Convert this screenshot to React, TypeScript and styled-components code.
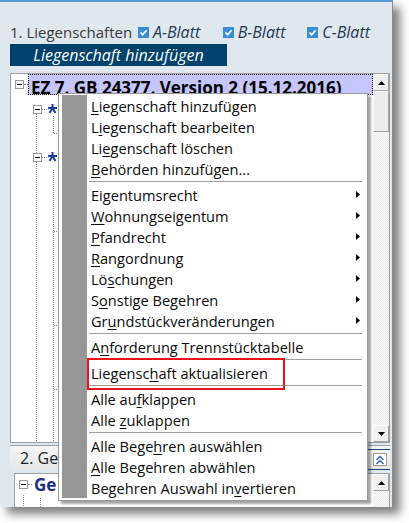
import React from "react";
import styled, { createGlobalStyle } from "styled-components";

const GlobalStyle = createGlobalStyle`
  html, body { margin: 0; padding: 0; background: #ffffff; }
  body { font-family: "Open Sans", "Noto Sans", "DejaVu Sans", sans-serif; }
  * { box-sizing: border-box; }
`;

const Stage = styled.div`
  width: 409px;
  height: 523px;
  position: relative;
  overflow: hidden;
  background: #ffffff;
`;

const Window = styled.div`
  width: 393px;
  height: 507px;
  background: #dfe7ef;
  border-top: 2px solid #5b9bd5;
  border-right: 1px solid #8a8a8a;
  box-shadow: 7px 7px 9px rgba(0, 0, 0, 0.5);
  padding-left: 10px;
  display: flex;
  flex-direction: column;
  overflow: hidden;
`;

const HeaderRow = styled.div`
  margin-top: 20px;
  height: 20px;
  display: flex;
  align-items: center;
  font-size: 15px;
  color: #3a3a3a;
`;

const HeaderLabel = styled.span`
  width: 133px;
  white-space: nowrap;
`;

const CheckGroup = styled.label`
  width: 88px;
  display: flex;
  align-items: center;
  gap: 4px;
`;

const CheckBox = styled.span`
  width: 11px;
  height: 11px;
  background: #3a8dd4;
  display: inline-flex;
  align-items: center;
  justify-content: center;
  flex: none;
`;

const CheckLabel = styled.span`
  font-style: italic;
  color: #26374f;
  font-size: 16px;
  white-space: nowrap;
`;

const AddButton = styled.div`
  margin-top: 2px;
  width: 217px;
  height: 25px;
  background: #00426b;
  color: #ffffff;
  font-style: italic;
  font-size: 16px;
  display: flex;
  align-items: center;
  justify-content: center;
`;

const TreePanel = styled.div`
  margin-top: 7px;
  width: 380px;
  height: 370px;
  border: 1px solid #a0a0a0;
  background: #ffffff;
  display: flex;
  flex: none;
`;

const TreeArea = styled.div`
  flex: 1;
  display: flex;
  flex-direction: column;
  overflow: hidden;
`;

const TreeRow = styled.div`
  height: 21px;
  display: flex;
  align-items: center;
  flex: none;
`;

const ToggleBox = styled.span<{ $ml: number }>`
  margin-left: ${(p) => p.$ml}px;
  width: 9px;
  height: 9px;
  border: 1px solid #9a9a9a;
  background: #ffffff;
  display: inline-flex;
  align-items: center;
  justify-content: center;
  flex: none;
  &::before {
    content: "";
    width: 5px;
    height: 1px;
    background: #000000;
  }
`;

const Stub = styled.span`
  width: 4px;
  height: 0;
  border-top: 1px dotted #8a8a8a;
  flex: none;
`;

const SelectedLabel = styled.div`
  flex: 1;
  height: 21px;
  background: #c6c6fe;
  border: 1px dotted #000000;
  padding-left: 2px;
  font-weight: 700;
  font-size: 17px;
  line-height: 25px;
  color: #000000;
  white-space: nowrap;
  overflow: hidden;
`;

const NodeLabel = styled.span`
  margin-left: 2px;
  font-weight: 700;
  font-size: 17px;
  color: #1b2f86;
  white-space: nowrap;
`;

const ScrollBar = styled.div`
  width: 16px;
  display: flex;
  flex-direction: column;
  background-color: #f4f4f4;
  background-image: repeating-conic-gradient(#e9e9e9 0 25%, #fbfbfb 0 50%);
  background-size: 2px 2px;
  flex: none;
`;

const ScrollButton = styled.div<{ $h: number }>`
  height: ${(p) => p.$h}px;
  background: #f0f0f0;
  border: 1px solid;
  border-color: #ffffff #a0a0a0 #a0a0a0 #f8f8f8;
  display: flex;
  align-items: center;
  justify-content: center;
  flex: none;
`;

const Thumb = styled.div`
  height: 41px;
  background: #ececec;
  border: 1px solid;
  border-color: #ffffff #a0a0a0 #a0a0a0 #f8f8f8;
  flex: none;
`;

const Track = styled.div`
  flex: 1;
`;

const SectionHeader = styled.div`
  margin-top: 2px;
  width: 380px;
  height: 25px;
  border-top: 1px solid #a0a0a0;
  background: linear-gradient(#f6f6f6, #e6e6e6);
  display: flex;
  align-items: center;
  padding-left: 10px;
  font-size: 16px;
  color: #1e1e1e;
  flex: none;
`;

const HeaderText = styled.span`
  flex: 1;
  white-space: nowrap;
  overflow: hidden;
`;

const CollapseCell = styled.div`
  align-self: flex-end;
  width: 22px;
  height: 21px;
  border-top: 1px solid #23407a;
  border-bottom: 1px solid #23407a;
  display: flex;
  align-items: center;
  justify-content: center;
  padding-left: 1px;
  flex: none;
`;

const CollapseBox = styled.span`
  width: 14px;
  height: 13px;
  border: 1px solid #9a9a9a;
  background: #ffffff;
  display: inline-flex;
  align-items: center;
  justify-content: center;
`;

const SecondPanel = styled.div`
  margin-top: 3px;
  margin-left: 4px;
  width: 376px;
  flex: 1;
  border: 1px solid #a0a0a0;
  border-bottom: none;
  background: #ffffff;
  display: flex;
`;

const Menu = styled.div`
  position: absolute;
  left: 58px;
  top: 93px;
  width: 310px;
  border: 1px solid #999999;
  background: #ffffff;
  padding: 1px 2px 2px 3px;
  box-shadow: 3px 3px 2px rgba(0, 0, 0, 0.35);
  display: flex;
`;

const Gutter = styled.div`
  width: 25px;
  background: #969696;
  flex: none;
`;

const MenuList = styled.div`
  flex: 1;
  display: flex;
  flex-direction: column;
`;

const MenuItem = styled.div<{ $framed?: boolean }>`
  position: relative;
  height: 21px;
  display: flex;
  align-items: center;
  justify-content: space-between;
  padding: 0 5px 0 4px;
  font-size: 14.6px;
  color: #0b0b0b;
  white-space: nowrap;
  u {
    text-decoration: underline;
    text-underline-offset: 2px;
  }
  ${(p) =>
    p.$framed &&
    `
    &::after {
      content: "";
      position: absolute;
      left: 0;
      top: -4px;
      width: 194px;
      height: 28px;
      border: 2px solid #e8141b;
    }
  `}
`;

const Separator = styled.div`
  height: 1px;
  margin: 2px 3px 2px 2px;
  background: #a0a0a0;
`;

type Entry =
  | { kind: "item"; label: string; u: number; sub?: boolean; framed?: boolean }
  | { kind: "sep" };

const entries: Entry[] = [
  { kind: "item", label: "Liegenschaft hinzufügen", u: 0 },
  { kind: "item", label: "Liegenschaft bearbeiten", u: 1 },
  { kind: "item", label: "Liegenschaft löschen", u: 2 },
  { kind: "item", label: "Behörden hinzufügen...", u: 0 },
  { kind: "sep" },
  { kind: "item", label: "Eigentumsrecht", u: -1, sub: true },
  { kind: "item", label: "Wohnungseigentum", u: 0, sub: true },
  { kind: "item", label: "Pfandrecht", u: 0, sub: true },
  { kind: "item", label: "Rangordnung", u: 0, sub: true },
  { kind: "item", label: "Löschungen", u: 2, sub: true },
  { kind: "item", label: "Sonstige Begehren", u: 1, sub: true },
  { kind: "item", label: "Grundstückveränderungen", u: 2, sub: true },
  { kind: "sep" },
  { kind: "item", label: "Anforderung Trennstücktabelle", u: 1 },
  { kind: "sep" },
  { kind: "item", label: "Liegenschaft aktualisieren", u: 8, framed: true },
  { kind: "sep" },
  { kind: "item", label: "Alle aufklappen", u: 7 },
  { kind: "item", label: "Alle zuklappen", u: 5 },
  { kind: "sep" },
  { kind: "item", label: "Alle Begehren auswählen", u: 9 },
  { kind: "item", label: "Alle Begehren abwählen", u: 0 },
  { kind: "item", label: "Begehren Auswahl invertieren", u: 19 },
];

function Mnemonic({ label, u }: { label: string; u: number }) {
  if (u < 0) return <span>{label}</span>;
  return (
    <span>
      {label.slice(0, u)}
      <u>{label[u]}</u>
      {label.slice(u + 1)}
    </span>
  );
}

const SubArrow = () => (
  <svg width="4" height="7" viewBox="0 0 4 7">
    <polygon points="0,0 4,3.5 0,7" fill="#000" />
  </svg>
);

const Tri = ({ up }: { up: boolean }) => (
  <svg width="7" height="4" viewBox="0 0 7 4">
    <polygon points={up ? "0,4 3.5,0 7,4" : "0,0 7,0 3.5,4"} fill="#000" />
  </svg>
);

const Check = () => (
  <svg width="9" height="9" viewBox="0 0 9 9">
    <polyline points="1.5,4.5 3.7,6.8 7.6,2.2" fill="none" stroke="#fff" strokeWidth="1.7" />
  </svg>
);

const Person = ({ y }: { y: number }) => (
  <g stroke="#1b3a9c" strokeWidth="2" fill="none">
    <line x1="37" y1={y + 3} x2="46" y2={y + 3} />
    <line x1="41.5" y1={y - 1} x2="41.5" y2={y + 4} />
    <polyline points={`38.5,${y + 8} 41.5,${y + 3} 44.5,${y + 8}`} />
  </g>
);

const dot = { stroke: "#8a8a8a", strokeWidth: 1, strokeDasharray: "1 1" };

const TreeGuides = () => (
  <svg width="60" height="347" viewBox="0 0 60 347">
    <line x1="25.5" y1="19" x2="25.5" y2="58" {...dot} />
    <line x1="25.5" y1="67" x2="25.5" y2="347" {...dot} />
    <rect x="22.5" y="10.5" width="8" height="8" fill="#fff" stroke="#9a9a9a" />
    <line x1="24" y1="14.5" x2="29" y2="14.5" stroke="#000" />
    <line x1="31" y1="14.5" x2="36" y2="14.5" {...dot} />
    <Person y={10} />
    <line x1="42.5" y1="21" x2="42.5" y2="38" {...dot} />
    <line x1="43" y1="38.5" x2="48" y2="38.5" {...dot} />
    <rect x="22.5" y="58.5" width="8" height="8" fill="#fff" stroke="#9a9a9a" />
    <line x1="24" y1="62.5" x2="29" y2="62.5" stroke="#000" />
    <line x1="31" y1="62.5" x2="36" y2="62.5" {...dot} />
    <Person y={58} />
    <line x1="42.5" y1="75" x2="42.5" y2="347" {...dot} />
    <line x1="43" y1="136.5" x2="48" y2="136.5" {...dot} />
    <line x1="43" y1="230.5" x2="48" y2="230.5" {...dot} />
    <line x1="43" y1="294.5" x2="48" y2="294.5" {...dot} />
  </svg>
);

const SecondGuides = () => (
  <svg width="40" height="12" viewBox="0 0 40 12">
    <line x1="8.5" y1="0" x2="8.5" y2="12" {...dot} />
    <line x1="25.5" y1="3" x2="25.5" y2="12" {...dot} />
  </svg>
);

const DoubleChevron = () => (
  <svg width="10" height="10" viewBox="0 0 10 10">
    <polyline points="1.5,5 5,1.5 8.5,5" fill="none" stroke="#2a5db0" strokeWidth="1.4" />
    <polyline points="1.5,9 5,5.5 8.5,9" fill="none" stroke="#2a5db0" strokeWidth="1.4" />
  </svg>
);

export default function App() {
  return (
    <>
      <GlobalStyle />
      <Stage>
        <Window>
          <HeaderRow>
            <HeaderLabel>1. Liegenschaften</HeaderLabel>
            {["A-Blatt", "B-Blatt", "C-Blatt"].map((t) => (
              <CheckGroup key={t}>
                <CheckBox>
                  <Check />
                </CheckBox>
                <CheckLabel>{t}</CheckLabel>
              </CheckGroup>
            ))}
          </HeaderRow>
          <AddButton>Liegenschaft hinzufügen</AddButton>
          <TreePanel>
            <TreeArea>
              <TreeRow>
                <ToggleBox $ml={4} />
                <Stub />
                <SelectedLabel>EZ 7, GB 24377, Version 2 (15.12.2016)</SelectedLabel>
              </TreeRow>
              <TreeGuides />
            </TreeArea>
            <ScrollBar>
              <ScrollButton $h={17}>
                <Tri up />
              </ScrollButton>
              <Thumb />
              <Track />
              <ScrollButton $h={17}>
                <Tri up={false} />
              </ScrollButton>
            </ScrollBar>
          </TreePanel>
          <SectionHeader>
            <HeaderText>2. Ge</HeaderText>
            <CollapseCell>
              <CollapseBox>
                <DoubleChevron />
              </CollapseBox>
            </CollapseCell>
          </SectionHeader>
          <SecondPanel>
            <TreeArea>
              <TreeRow>
                <ToggleBox $ml={4} />
                <Stub />
                <NodeLabel>Ge</NodeLabel>
              </TreeRow>
              <SecondGuides />
            </TreeArea>
            <ScrollBar>
              <ScrollButton $h={17}>
                <Tri up />
              </ScrollButton>
              <Track />
            </ScrollBar>
          </SecondPanel>
        </Window>
        <Menu>
          <Gutter />
          <MenuList>
            {entries.map((e, i) =>
              e.kind === "sep" ? (
                <Separator key={i} />
              ) : (
                <MenuItem key={i} $framed={e.framed}>
                  <Mnemonic label={e.label} u={e.u} />
                  {e.sub && <SubArrow />}
                </MenuItem>
              )
            )}
          </MenuList>
        </Menu>
      </Stage>
    </>
  );
}
